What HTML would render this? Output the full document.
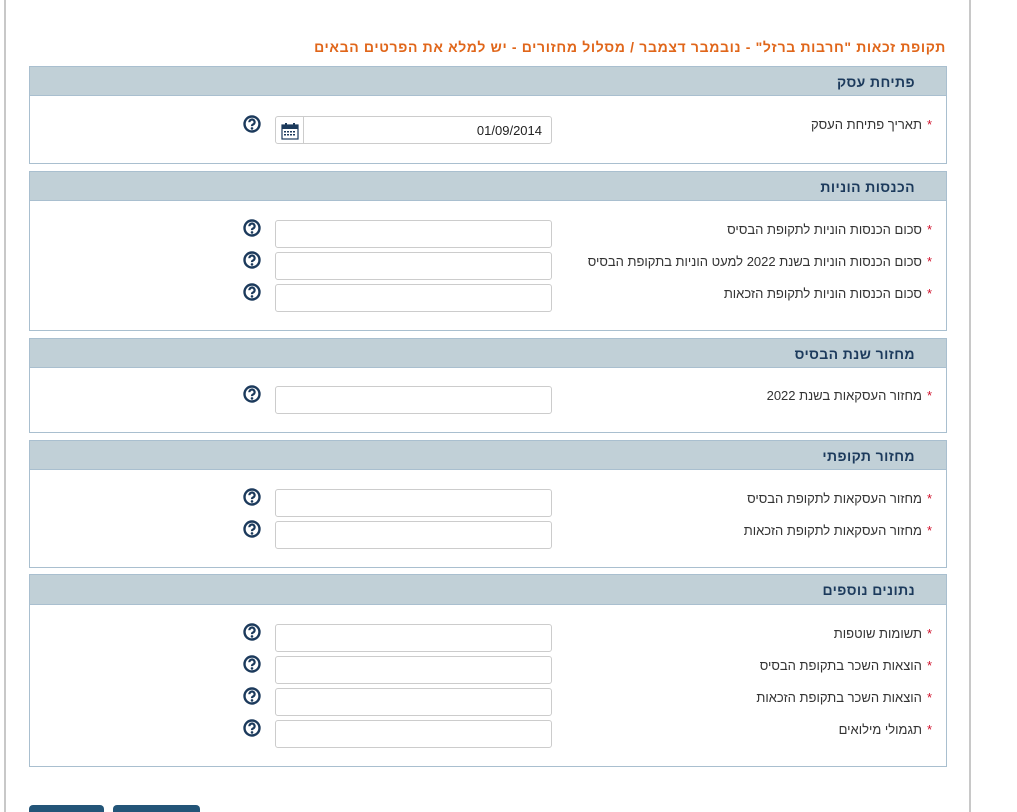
<!DOCTYPE html>
<html><head><meta charset="utf-8"><style>
*{margin:0;padding:0;box-sizing:border-box}
html,body{width:1017px;height:812px;overflow:hidden}
body{background:#fff;font-family:"Liberation Sans","DejaVu Sans",sans-serif;position:relative}
.vl{position:absolute;top:0;width:2px;height:812px;background:#c8c8c8}
.title{position:absolute;right:71px;top:39px;color:#e0661a;font-weight:bold;font-size:14px;letter-spacing:0.65px;direction:rtl;white-space:nowrap}
.hd{position:absolute;left:29px;width:918px;background:#c1d0d7;border:1px solid #a9bfcf;border-bottom:none}
.hd span{position:absolute;right:31px;top:7px;font-size:14px;letter-spacing:0.4px;font-weight:bold;color:#1c3a5c;direction:rtl;white-space:nowrap}
.bd{position:absolute;left:29px;width:918px;border:1px solid #a9bfcf;background:#fff}
.lb{position:absolute;right:85px;font-size:13px;color:#333;direction:rtl;white-space:nowrap}
.lb b{color:#d0102a;font-weight:normal;margin-left:5px}
.in{position:absolute;left:275px;width:277px;height:28px;border:1px solid #ccc;border-radius:3px;background:#fff}
.q{position:absolute;left:243px;width:18px;height:18px}
.btn{position:absolute;top:805px;height:20px;background:#235578;border-radius:4px}
</style></head><body>
<div class="vl" style="left:4px"></div>
<div class="vl" style="left:969px"></div>
<div class="title">תקופת זכאות "חרבות ברזל" - נובמבר דצמבר / מסלול מחזורים - יש למלא את הפרטים הבאים</div>

<div class="hd" style="top:66px;height:30px"><span>פתיחת עסק</span></div>
<div class="bd" style="top:95px;height:69px"></div>
<div class="lb" style="top:117px"><b>*</b>תאריך פתיחת העסק</div>
<div class="in" style="top:116px"><div style="position:absolute;left:0;top:0;width:28px;height:26px;border-right:1px solid #ccc"><svg width="18" height="18" style="position:absolute;left:5px;top:5px" viewBox="0 0 18 18"><rect x="1" y="3" width="16" height="14" fill="#fff" stroke="#1c3a5c" stroke-width="1.2"/><rect x="1" y="3" width="16" height="4" fill="#1c3a5c"/><rect x="4" y="1" width="2" height="4" fill="#1c3a5c"/><rect x="12" y="1" width="2" height="4" fill="#1c3a5c"/><g fill="#1c3a5c"><rect x="3" y="9" width="2" height="1.5"/><rect x="6" y="9" width="2" height="1.5"/><rect x="9" y="9" width="2" height="1.5"/><rect x="12" y="9" width="2" height="1.5"/><rect x="3" y="12" width="2" height="1.5"/><rect x="6" y="12" width="2" height="1.5"/><rect x="9" y="12" width="2" height="1.5"/><rect x="12" y="12" width="2" height="1.5"/></g></svg></div><span style="position:absolute;right:9px;top:6px;font-size:13px;color:#222">01/09/2014</span></div>

<div class="hd" style="top:171px;height:30px"><span>הכנסות הוניות</span></div>
<div class="bd" style="top:200px;height:131px"></div>
<div class="lb" style="top:222px"><b>*</b>סכום הכנסות הוניות לתקופת הבסיס</div>
<div class="lb" style="top:254px"><b>*</b>סכום הכנסות הוניות בשנת 2022 למעט הוניות בתקופת הבסיס</div>
<div class="lb" style="top:286px"><b>*</b>סכום הכנסות הוניות לתקופת הזכאות</div>
<div class="in" style="top:220px"></div><div class="in" style="top:252px"></div><div class="in" style="top:284px"></div>

<div class="hd" style="top:338px;height:30px"><span>מחזור שנת הבסיס</span></div>
<div class="bd" style="top:367px;height:66px"></div>
<div class="lb" style="top:388px"><b>*</b>מחזור העסקאות בשנת 2022</div>
<div class="in" style="top:386px"></div>

<div class="hd" style="top:440px;height:30px"><span>מחזור תקופתי</span></div>
<div class="bd" style="top:469px;height:99px"></div>
<div class="lb" style="top:491px"><b>*</b>מחזור העסקאות לתקופת הבסיס</div>
<div class="lb" style="top:523px"><b>*</b>מחזור העסקאות לתקופת הזכאות</div>
<div class="in" style="top:489px"></div><div class="in" style="top:521px"></div>

<div class="hd" style="top:574px;height:31px"><span>נתונים נוספים</span></div>
<div class="bd" style="top:604px;height:163px"></div>
<div class="lb" style="top:626px"><b>*</b>תשומות שוטפות</div>
<div class="lb" style="top:658px"><b>*</b>הוצאות השכר בתקופת הבסיס</div>
<div class="lb" style="top:690px"><b>*</b>הוצאות השכר בתקופת הזכאות</div>
<div class="lb" style="top:722px"><b>*</b>תגמולי מילואים</div>
<div class="in" style="top:624px"></div><div class="in" style="top:656px"></div><div class="in" style="top:688px"></div><div class="in" style="top:720px"></div>

<svg width="0" height="0" style="position:absolute"><defs><g id="q"><circle cx="9" cy="9" r="7.5" fill="none" stroke="#1c3a5c" stroke-width="2.4"/><path d="M6.4 7.2a2.6 2.6 0 1 1 3.6 2.3c-.8.4-1 .8-1 1.6" fill="none" stroke="#1c3a5c" stroke-width="2.2"/><circle cx="9" cy="13.4" r="1.3" fill="#1c3a5c"/></g></defs></svg>
<svg class="q" style="top:115px"><use href="#q"/></svg>
<svg class="q" style="top:219px"><use href="#q"/></svg>
<svg class="q" style="top:251px"><use href="#q"/></svg>
<svg class="q" style="top:283px"><use href="#q"/></svg>
<svg class="q" style="top:385px"><use href="#q"/></svg>
<svg class="q" style="top:488px"><use href="#q"/></svg>
<svg class="q" style="top:520px"><use href="#q"/></svg>
<svg class="q" style="top:623px"><use href="#q"/></svg>
<svg class="q" style="top:655px"><use href="#q"/></svg>
<svg class="q" style="top:687px"><use href="#q"/></svg>
<svg class="q" style="top:719px"><use href="#q"/></svg>

<div class="btn" style="left:29px;width:75px"></div>
<div class="btn" style="left:113px;width:87px"></div>
</body></html>
